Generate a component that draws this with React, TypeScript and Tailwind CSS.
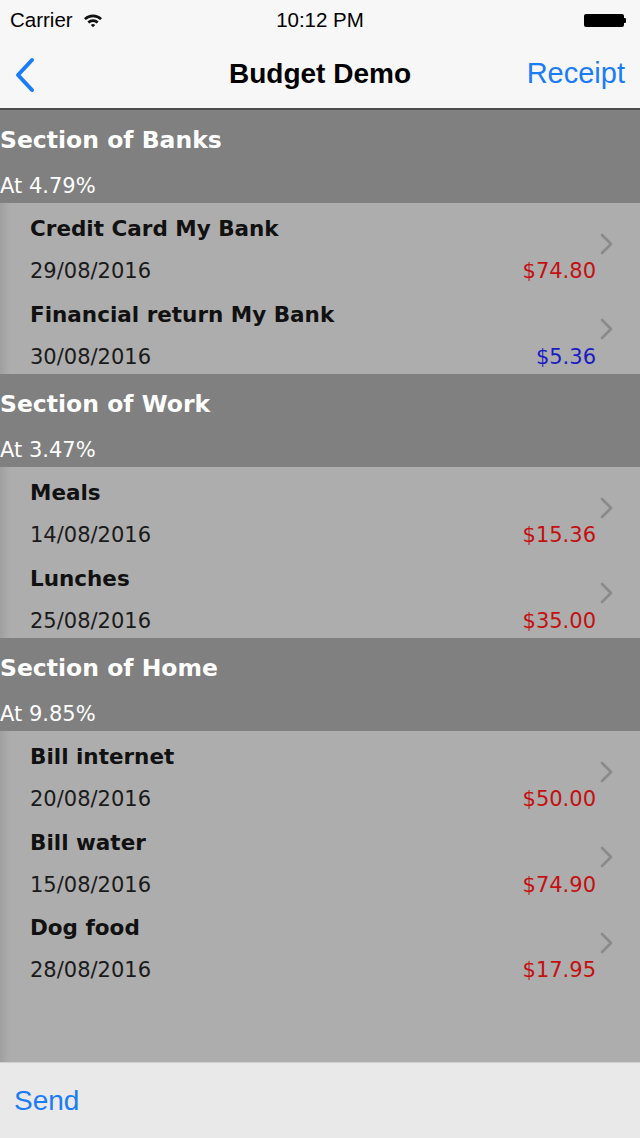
import React from 'react';

type Item = { title: string; date: string; amount: string; income?: boolean };
type Section = { name: string; rate: string; items: Item[] };

const sections: Section[] = [
  {
    name: 'Section of Banks',
    rate: 'At 4.79%',
    items: [
      { title: 'Credit Card My Bank', date: '29/08/2016', amount: '$74.80' },
      { title: 'Financial return My Bank', date: '30/08/2016', amount: '$5.36', income: true },
    ],
  },
  {
    name: 'Section of Work',
    rate: 'At 3.47%',
    items: [
      { title: 'Meals', date: '14/08/2016', amount: '$15.36' },
      { title: 'Lunches', date: '25/08/2016', amount: '$35.00' },
    ],
  },
  {
    name: 'Section of Home',
    rate: 'At 9.85%',
    items: [
      { title: 'Bill internet', date: '20/08/2016', amount: '$50.00' },
      { title: 'Bill water', date: '15/08/2016', amount: '$74.90' },
      { title: 'Dog food', date: '28/08/2016', amount: '$17.95' },
    ],
  },
];

const ios = { fontFamily: '"Liberation Sans", Arial, sans-serif' };
const verdana = { fontFamily: '"DejaVu Sans", Verdana, sans-serif' };

function Row({ item }: { item: Item }) {
  return (
    <div className="flex h-[85.5px] bg-[linear-gradient(to_right,#9f9f9f,#adadad_10px)]">
      <div className="flex-1 pl-[30px] pt-[12px]">
        <div className="text-[21.5px] font-bold leading-[28px] text-[#111]">{item.title}</div>
        <div className="mt-[14px] flex justify-between text-[21px] leading-[28px]">
          <span className="text-[#1a1a1a]">{item.date}</span>
          <span className={item.income ? 'text-[#1c1cc4]' : 'text-[#c41010]'}>{item.amount}</span>
        </div>
      </div>
      <div className="flex w-[44px] items-center pb-[4px] pl-[4px]">
        <svg width="13" height="22" viewBox="0 0 13 22" fill="none">
          <path d="M2 2 L11 11 L2 20" stroke="#8a8a8a" strokeWidth="2.6" strokeLinecap="round" strokeLinejoin="round" />
        </svg>
      </div>
    </div>
  );
}

export default function App() {
  return (
    <div className="flex h-[1138px] w-[640px] flex-col overflow-hidden bg-[#adadad]">
      {/* status + nav */}
      <div className="bg-[#f7f7f7]" style={ios}>
        <div className="relative flex h-[40px] items-center px-[10px] text-[20.5px] text-black">
          <span>Carrier</span>
          <svg className="ml-[10px]" width="20" height="15" viewBox="0 0 20 15">
            <path d="M1 5.2 A13 13 0 0 1 19 5.2 L17.2 7 A10.5 10.5 0 0 0 2.8 7 Z" fill="#111" />
            <path d="M4.4 8.6 A8 8 0 0 1 15.6 8.6 L13.8 10.4 A5.5 5.5 0 0 0 6.2 10.4 Z" fill="#111" />
            <path d="M7.8 12 A3.2 3.2 0 0 1 12.2 12 L10 14.3 Z" fill="#111" />
          </svg>
          <span className="absolute left-1/2 -translate-x-1/2">10:12 PM</span>
          <div className="ml-auto mr-[4px] flex items-center">
            <div className="h-[13px] w-[40px] rounded-[2px] bg-black" />
            <div className="h-[5px] w-[2px] rounded-r-[1px] bg-black" />
          </div>
        </div>
        <div className="relative flex h-[70px] items-center border-b-2 border-[#4d4d4d]">
          <svg className="ml-[14px] mt-[2px]" width="22" height="36" viewBox="0 0 22 36" fill="none">
            <path d="M18 3 L4 18 L18 33" stroke="#1a7cf6" strokeWidth="4" strokeLinecap="round" strokeLinejoin="round" />
          </svg>
          <span className="absolute left-1/2 -translate-x-1/2 text-[28px] font-semibold text-black">Budget Demo</span>
          <span className="ml-auto mr-[15px] text-[29px] text-[#1a7cf6]">Receipt</span>
        </div>
      </div>

      {/* table */}
      <div className="flex-1 bg-[linear-gradient(to_right,#9f9f9f,#adadad_10px)]" style={verdana}>
        {sections.map((s) => (
          <div key={s.name}>
            <div className="bg-[#808080] pt-[15px] pb-[5px] text-white">
              <div className="text-[23.5px] font-bold leading-[30px]">{s.name}</div>
              <div className="mt-[19px] text-[21px] leading-[24px]">{s.rate}</div>
            </div>
            {s.items.map((it) => (
              <Row key={it.title} item={it} />
            ))}
          </div>
        ))}
      </div>

      {/* toolbar */}
      <div className="flex h-[76px] items-center border-t border-[#cfcfcf] bg-[#e9e9e9] px-[14px]" style={ios}>
        <span className="text-[28px] text-[#1a7cf6]">Send</span>
      </div>
    </div>
  );
}
